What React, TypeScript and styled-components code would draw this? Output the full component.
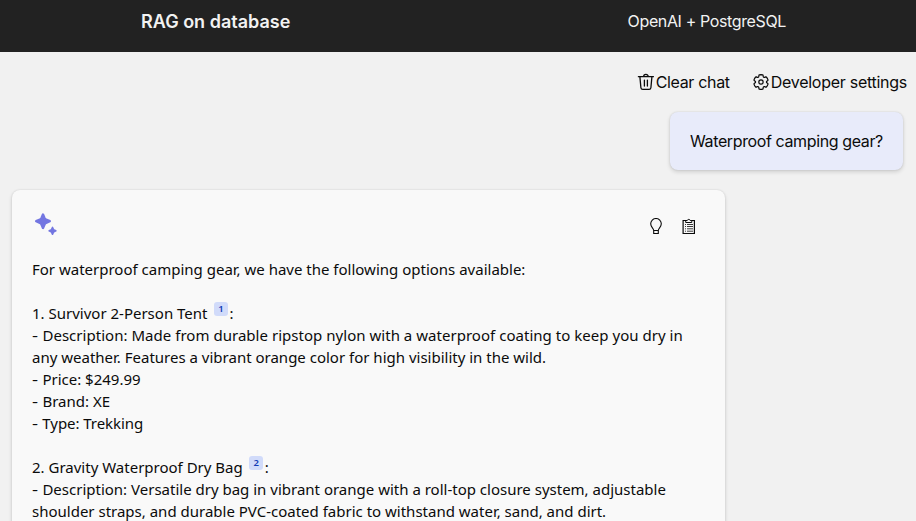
import React from 'react';
import styled, { createGlobalStyle } from 'styled-components';

const GlobalStyle = createGlobalStyle`
  *, *::before, *::after { box-sizing: border-box; }
  html, body, #root { height: 100%; }
  body {
    margin: 0;
    overflow: hidden;
    background: #f1f1f1;
    color: #0b0b0b;
    font-family: Inter, Roboto, sans-serif;
    font-size: 16px;
  }
`;

const Page = styled.div`
  display: flex;
  flex-direction: column;
  height: 100%;
  overflow: hidden;
`;

const Header = styled.header`
  display: flex;
  flex: none;
  justify-content: space-between;
  align-items: flex-start;
  height: 52px;
  padding: 11px 130px 0 141px;
  background: #222222;
  color: #f2f2f2;
`;

const Title = styled.h1`
  margin: 0;
  font-size: 18px;
  font-weight: 600;
  line-height: 22px;
`;

const Subtitle = styled.p`
  margin: 0;
  font-size: 16px;
  line-height: 20px;
  letter-spacing: -0.37px;
`;

const Toolbar = styled.div`
  display: flex;
  flex: none;
  justify-content: flex-end;
  gap: 22px;
  padding: 20px 9px 0 0;
`;

const ToolButton = styled.button<{ $tracking: number }>`
  display: flex;
  align-items: center;
  height: 20px;
  padding: 0;
  border: 0;
  background: none;
  color: inherit;
  font: inherit;
  line-height: 20px;
  letter-spacing: ${(p) => p.$tracking}px;
  white-space: nowrap;

  svg { flex: none; margin-right: 1px; }
`;

const Chat = styled.main`
  display: flex;
  flex: none;
  flex-direction: column;
  gap: 20px;
  padding: 20px 13px 0 12px;
`;

const UserMessage = styled.div`
  align-self: flex-end;
  width: 233px;
  height: 58px;
  padding: 19px 0 0 20px;
  border-radius: 8px;
  background: #e8ebfa;
  box-shadow: 0 2px 4px rgba(0, 0, 0, 0.14), 0 0 2px rgba(0, 0, 0, 0.12);
  line-height: 20px;
  letter-spacing: -0.38px;
  white-space: nowrap;
`;

const Answer = styled.article`
  width: 713px;
  height: 400px;
  padding: 20px 28px 0 20px;
  border-radius: 8px;
  background: #f9f9f9;
  box-shadow: 0 2px 4px rgba(0, 0, 0, 0.14), 0 0 2px rgba(0, 0, 0, 0.12);
`;

const AnswerHeader = styled.div`
  display: flex;
  justify-content: space-between;
  align-items: flex-start;
  height: 48px;
`;

const Actions = styled.div`
  display: flex;
  gap: 17px;
  padding-top: 8px;
`;

const IconButton = styled.button`
  display: flex;
  padding: 0;
  border: 0;
  background: none;
  color: inherit;
`;

const AnswerText = styled.div`
  font-family: 'Noto Sans', 'Open Sans', sans-serif;
  font-size: 15px;
`;

const Line = styled.div<{ $tracking?: number }>`
  height: 22px;
  line-height: 22px;
  letter-spacing: ${(p) => p.$tracking ?? 0}px;
  white-space: pre;
`;

const Dash = styled.span`
  display: inline-block;
  margin-right: 0.5px;
  transform: scaleX(1.25);
  transform-origin: left;
  width: 6px;
`;

const Citation = styled.a`
  display: inline-flex;
  justify-content: center;
  align-items: center;
  width: 14px;
  height: 14px;
  margin: -4px 1.6px 0 2.6px;
  border-radius: 3px;
  background: #d1dbfa;
  color: #123bb6;
  font-size: 9.5px;
  font-weight: 600;
  line-height: 14px;
  vertical-align: 7px;
`;

const TrashIcon = () => (
  <svg width="18" height="18" viewBox="0 0 18 18" fill="none" stroke="currentColor" strokeWidth="1.3" strokeLinecap="round" strokeLinejoin="round">
    <path d="M1.4 3.7h15M6.6 3.6a2.3 2.3 0 0 1 4.6 0M2.9 3.9l1 10.8a1.9 1.9 0 0 0 1.9 1.7h6.2a1.9 1.9 0 0 0 1.9-1.7l1-10.800M7.4 7.1v6M10.4 7.1v6" />
  </svg>
);

const GearIcon = () => (
  <svg width="18" height="18" viewBox="0 0 24 24" fill="none" stroke="currentColor" strokeWidth="1.6">
    <path d="M12.01 2.25c.74 0 1.47.1 2.18.25.32.07.55.33.59.65l.17 1.53a1.38 1.38 0 0 0 1.92 1.11l1.4-.61c.3-.13.64-.06.85.17a9.8 9.8 0 0 1 2.2 3.8c.1.3 0 .63-.26.82l-1.25.92a1.38 1.38 0 0 0 0 2.22l1.25.92c.26.19.36.52.27.82a9.8 9.8 0 0 1-2.2 3.8.75.75 0 0 1-.85.17l-1.4-.62a1.38 1.38 0 0 0-1.93 1.12l-.17 1.52a.75.75 0 0 1-.58.65 9.52 9.52 0 0 1-4.4 0 .75.75 0 0 1-.57-.65l-.17-1.52a1.38 1.38 0 0 0-1.93-1.11l-1.4.62a.75.75 0 0 1-.85-.18 9.8 9.8 0 0 1-2.2-3.8c-.1-.3 0-.63.26-.82l1.25-.92a1.38 1.38 0 0 0 0-2.22l-1.24-.92a.75.75 0 0 1-.28-.82 9.8 9.8 0 0 1 2.2-3.8c.23-.23.57-.3.86-.17l1.4.62c.4.17.86.15 1.25-.08.38-.22.63-.6.68-1.04l.17-1.53a.75.75 0 0 1 .58-.65c.72-.16 1.45-.24 2.2-.25Z" />
    <circle cx="12" cy="12" r="2.9" />
  </svg>
);

const SparkleIcon = () => (
  <svg width="28" height="28" viewBox="0 0 28 28" fill="#7376e1" stroke="#7376e1" strokeLinejoin="round">
    <path strokeWidth="2.4" d="M11 4.5L12.6 8.2Q13.1 9.2 14.1 9.6L17.800 11.200L14.1 12.800Q13.1 13.2 12.6 14.200L11 17.900L9.4 14.200Q8.9 13.2 7.9 12.800L4.200 11.200L7.9 9.600Q8.9 9.2 9.4 8.200Z" />
    <path strokeWidth="1.7" d="M20.5 17.500L21.3 19.300Q21.500 19.800 22 20L23.800 20.800L22 21.600Q21.500 21.800 21.300 22.300L20.500 24.100L19.700 22.300Q19.500 21.800 19 21.600L17.200 20.800L19 20Q19.500 19.800 19.700 19.300Z" />
  </svg>
);

const BulbIcon = () => (
  <svg width="16" height="18" viewBox="0 0 16 18" fill="none" stroke="currentColor" strokeWidth="1.1">
    <path d="M5.7 12.5C5.7 10.2 2.7 9.2 2.7 5.8A5.3 5.3 0 0 1 13.3 5.8C13.3 9.2 10.3 10.2 10.3 12.5ZM5.7 12.5v3h4.6v-3" />
  </svg>
);

const ClipboardIcon = () => (
  <svg width="16" height="18" viewBox="0 0 16 18" fill="none" stroke="currentColor">
    <path strokeWidth="1.2" d="M5 2.5H2.1v13h11.3v-13h-2.9" />
    <path d="M4.7 4.5v-2h1.6a1.5 1.5 0 0 1 2.9 0h1.600v2Z" />
    <path d="M4 6.5h1m1 0h6M4 8.500h1m1 0h6M4 10.800h1m1 0h6M4 13.200h1m1 0h6" strokeWidth="0.8" />
  </svg>
);

export default function App() {
  return (
    <Page>
      <GlobalStyle />
      <Header>
        <Title>RAG on database</Title>
        <Subtitle>OpenAI + PostgreSQL</Subtitle>
      </Header>
      <Toolbar>
        <ToolButton $tracking={-0.33}><TrashIcon />Clear chat</ToolButton>
        <ToolButton $tracking={-0.27}><GearIcon />Developer settings</ToolButton>
      </Toolbar>
      <Chat>
        <UserMessage>Waterproof camping gear?</UserMessage>
        <Answer>
          <AnswerHeader>
            <SparkleIcon />
            <Actions>
              <IconButton aria-label="Show thought process"><BulbIcon /></IconButton>
              <IconButton aria-label="Show supporting content"><ClipboardIcon /></IconButton>
            </Actions>
          </AnswerHeader>
          <AnswerText>
            <Line>For waterproof camping gear, we have the following options available:</Line>
            <Line />
            <Line>1. Survivor 2-Person Tent <Citation>1</Citation>:</Line>
            <Line $tracking={0.03}><Dash>-</Dash> Description: Made from durable ripstop nylon with a waterproof coating to keep you dry in</Line>
            <Line>any weather. Features a vibrant orange color for high visibility in the wild.</Line>
            <Line><Dash>-</Dash> Price: $249.99</Line>
            <Line><Dash>-</Dash> Brand: XE</Line>
            <Line $tracking={-0.06}><Dash>-</Dash> Type: Trekking</Line>
            <Line />
            <Line>2. Gravity Waterproof Dry Bag <Citation>2</Citation>:</Line>
            <Line><Dash>-</Dash> Description: Versatile dry bag in vibrant orange with a roll-top closure system, adjustable</Line>
            <Line>shoulder straps, and durable PVC-coated fabric to withstand water, sand, and dirt.</Line>
          </AnswerText>
        </Answer>
      </Chat>
    </Page>
  );
}
